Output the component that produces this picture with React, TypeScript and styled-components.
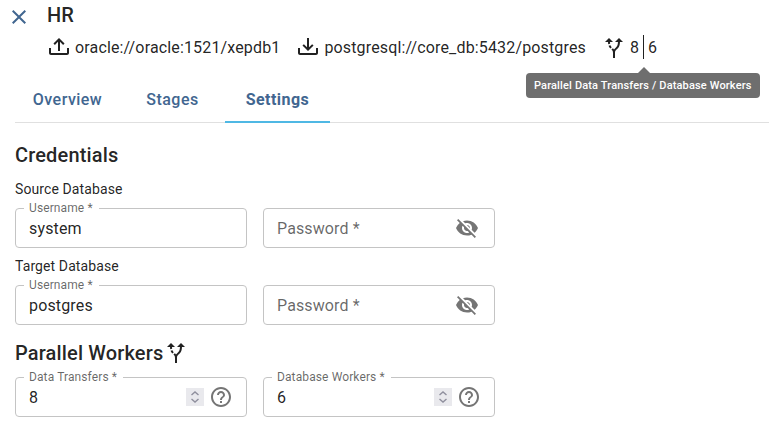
import React from "react";
import styled, { createGlobalStyle } from "styled-components";
import { MdAltRoute, MdClose, MdHelpOutline, MdVisibilityOff } from "react-icons/md";

const GlobalStyle = createGlobalStyle`
  * { box-sizing: border-box; }
  body {
    margin: 0;
    background: #fff;
    color: rgba(0, 0, 0, 0.87);
    font-family: Roboto, "Liberation Sans", sans-serif;
    font-size: 16px;
    overflow: hidden;
  }
  svg { display: block; flex: none; }
`;

const Page = styled.main`
  width: 769px;
  height: 433px;
  overflow: hidden;
  padding-left: 15px;
`;

const Header = styled.header`
  display: flex;
  height: 76px;
`;

const CloseButton = styled.button`
  display: block;
  width: 24px;
  height: 24px;
  margin: 5px 16px 0 -8px;
  padding: 0;
  border: 0;
  background: none;
  color: #416690;
`;

const HeaderBody = styled.div`
  flex: none;
`;

const Title = styled.h1`
  margin: 0;
  height: 36px;
  line-height: 30px;
  font-size: 20px;
  font-weight: 500;
  letter-spacing: 0.15px;
`;

const Connections = styled.div`
  display: flex;
  height: 24px;
`;

const Connection = styled.div<{ $width: number }>`
  display: flex;
  align-items: center;
  gap: 4px;
  width: ${(p) => p.$width}px;
  line-height: 24px;
  letter-spacing: 0.15px;
  white-space: nowrap;
`;

const WorkerCounts = styled.div`
  position: relative;
  display: flex;
  height: 24px;
  line-height: 24px;
  padding-left: 4px;
`;

const CountDivider = styled.span`
  width: 1px;
  height: 24px;
  margin: -1px 4px 0 4px;
  background: rgba(0, 0, 0, 0.87);
`;

const Tooltip = styled.div`
  position: absolute;
  top: 37px;
  left: -100px;
  width: 234px;
  height: 25px;
  padding-left: 8px;
  border-radius: 4px;
  background: #6e6e6e;
  color: #fff;
  font-size: 11px;
  font-weight: 500;
  line-height: 25px;
  letter-spacing: 0.15px;
  white-space: nowrap;

  &::before {
    content: "";
    position: absolute;
    top: -6px;
    left: 112px;
    border: 6px solid transparent;
    border-top: 0;
    border-bottom-color: #6e6e6e;
  }
`;

const Tabs = styled.nav`
  display: flex;
  height: 47px;
  border-bottom: 1px solid #e0e0e0;
`;

const Tab = styled.button<{ $width: number; $active?: boolean }>`
  width: ${(p) => p.$width}px;
  height: 47px;
  padding: ${(p) => (p.$active ? 2 : 0)}px 0 0;
  border: 0;
  border-bottom: ${(p) => (p.$active ? "2px solid #4fb8e4" : "0")};
  background: none;
  color: #416690;
  font-family: inherit;
  font-size: 16px;
  font-weight: ${(p) => (p.$active ? 700 : 500)};
  letter-spacing: 0.457px;
`;

const SectionTitle = styled.h2`
  display: flex;
  align-items: center;
  gap: 1px;
  height: 32px;
  margin: 0;
  font-size: 20px;
  font-weight: 500;
  letter-spacing: 0.15px;
`;

const Credentials = styled.section`
  padding-top: 16px;
`;

const Workers = styled.section`
  padding-top: 12px;
`;

const GroupTitle = styled.h3`
  margin: 8px 0 0;
  height: 29px;
  padding-top: 3px;
  font-size: 14px;
  font-weight: 400;
  line-height: 14px;
  letter-spacing: 0.1px;
`;

const FieldRow = styled.div<{ $top?: number }>`
  display: flex;
  gap: 16px;
  margin-top: ${(p) => p.$top ?? 0}px;
`;

const FieldBox = styled.div`
  position: relative;
  display: flex;
  align-items: center;
  width: 232px;
  height: 40px;
  padding: 0 13px;
  border: 1px solid #c4c4c4;
  border-radius: 4px;
`;

const FloatingLabel = styled.label`
  position: absolute;
  top: -8px;
  left: 8px;
  padding: 0 6px 0 5px;
  background: #fff;
  color: rgba(0, 0, 0, 0.6);
  font-size: 12px;
  line-height: 14px;
  letter-spacing: 0.11px;
  white-space: nowrap;
`;

const Value = styled.span<{ $placeholder?: boolean }>`
  flex: 1;
  letter-spacing: ${(p) => (p.$placeholder ? 0.12 : 0.15)}px;
  color: ${(p) => (p.$placeholder ? "rgba(0, 0, 0, 0.6)" : "inherit")};
`;

const Adornment = styled.span<{ $inset?: number }>`
  margin-right: ${(p) => p.$inset ?? 0}px;
  color: #757575;
`;

const Spinner = styled.span`
  display: grid;
  place-items: center;
  width: 18px;
  height: 18px;
  margin-right: 5px;
  background: #e9e9ed;
`;

const trayPath = "M2 12H4V17H20V12H22V17C22 18.11 21.11 19 20 19H4C2.9 19 2 18.11 2 17V12";

function TrayIcon({ direction }: { direction: "up" | "down" }) {
  const arrow =
    direction === "up"
      ? "M12 2L6.46 7.46L7.88 8.88L11 5.75V15H13V5.75L16.13 8.88L17.55 7.45L12 2Z"
      : "M12 15L17.55 9.54L16.13 8.13L13 11.25V2H11V11.25L7.88 8.13L6.46 9.55L12 15Z";
  return (
    <svg width="24" height="24" viewBox="0 0 24 24" fill="currentColor">
      <path d={trayPath + arrow} />
    </svg>
  );
}

function TextField({ label, value }: { label: string; value: string }) {
  return (
    <FieldBox>
      <FloatingLabel>{label}</FloatingLabel>
      <Value>{value}</Value>
    </FieldBox>
  );
}

function PasswordField() {
  return (
    <FieldBox>
      <Value $placeholder>Password *</Value>
      <Adornment $inset={2}>
        <MdVisibilityOff size={24} />
      </Adornment>
    </FieldBox>
  );
}

function NumberField({ label, value }: { label: string; value: number }) {
  return (
    <FieldBox>
      <FloatingLabel>{label}</FloatingLabel>
      <Value>{value}</Value>
      <Spinner>
        <svg width="10" height="14" viewBox="0 0 10 14" fill="none" stroke="#8f8f9d" strokeWidth="1.4">
          <path d="M1.5 5L5 2L8.5 5M1.5 9L5 12L8.5 9" />
        </svg>
      </Spinner>
      <Adornment>
        <MdHelpOutline size={24} />
      </Adornment>
    </FieldBox>
  );
}

export default function App() {
  return (
    <>
      <GlobalStyle />
      <Page>
        <Header>
          <CloseButton aria-label="Close">
            <MdClose size={24} />
          </CloseButton>
          <HeaderBody>
            <Title>HR</Title>
            <Connections>
              <Connection $width={249.4}>
                <TrayIcon direction="up" />
                oracle://oracle:1521/xepdb1
              </Connection>
              <Connection $width={305.6}>
                <TrayIcon direction="down" />
                postgresql://core_db:5432/postgres
              </Connection>
              <MdAltRoute size={24} />
              <WorkerCounts>
                <span>8</span>
                <CountDivider />
                <span>6</span>
                <Tooltip role="tooltip">Parallel Data Transfers / Database Workers</Tooltip>
              </WorkerCounts>
            </Connections>
          </HeaderBody>
        </Header>
        <Tabs>
          <Tab $width={105}>Overview</Tab>
          <Tab $width={105}>Stages</Tab>
          <Tab $width={105} $active>
            Settings
          </Tab>
        </Tabs>
        <Credentials>
          <SectionTitle>Credentials</SectionTitle>
          <GroupTitle>Source Database</GroupTitle>
          <FieldRow>
            <TextField label="Username *" value="system" />
            <PasswordField />
          </FieldRow>
          <GroupTitle>Target Database</GroupTitle>
          <FieldRow>
            <TextField label="Username *" value="postgres" />
            <PasswordField />
          </FieldRow>
        </Credentials>
        <Workers>
          <SectionTitle>
            Parallel Workers
            <MdAltRoute size={24} />
          </SectionTitle>
          <FieldRow $top={8}>
            <NumberField label="Data Transfers *" value={8} />
            <NumberField label="Database Workers *" value={6} />
          </FieldRow>
        </Workers>
      </Page>
    </>
  );
}
